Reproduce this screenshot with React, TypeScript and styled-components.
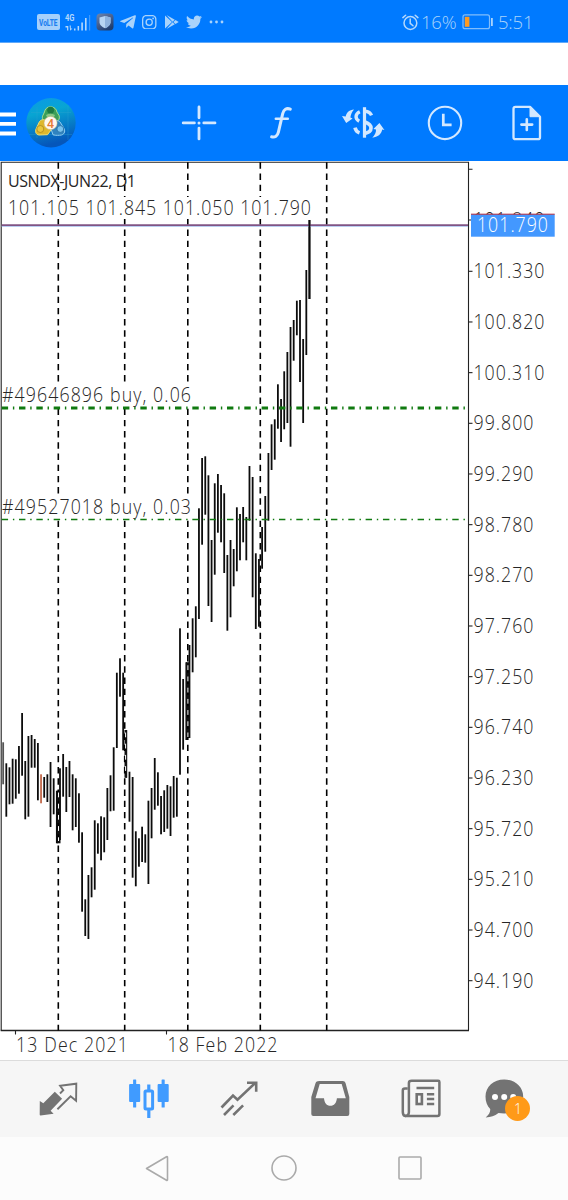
import React from "react";
import styled, { createGlobalStyle } from "styled-components";
import { FaTelegramPlane, FaTwitter } from "react-icons/fa";
import { BsInstagram } from "react-icons/bs";

const FONT = '"Open Sans", "Noto Sans", sans-serif';

const GlobalStyle = createGlobalStyle`
  body { margin: 0; background: #fff; font-family: ${FONT}; }
  * { box-sizing: border-box; }
  svg { display: block; flex: none; }
`;

const Screen = styled.div`
  width: 568px;
  height: 1200px;
  display: flex;
  flex-direction: column;
  overflow: hidden;
  background: #fff;
`;

const StatusBar = styled.header`
  height: 43px;
  padding: 0 36px 0 37px;
  display: flex;
  align-items: center;
  justify-content: space-between;
  background: #007aff;
  border-bottom: 1px solid #5fa9fa;
  color: #a9d3fb;
`;

const StatusGroup = styled.div`
  display: flex;
  align-items: center;
  height: 42px;
  padding-top: 2px;
`;

const Slot = styled.span<{ $w: number }>`
  display: flex;
  justify-content: center;
  width: ${(p) => p.$w}px;
`;

const StatusText = styled.span<{ $w: number }>`
  width: ${(p) => p.$w}px;
  font-size: 18.5px;
  font-weight: 300;
  line-height: 24px;
  letter-spacing: -0.2px;
  white-space: nowrap;
`;

const Spacer = styled.div`
  height: 42px;
  background: #fff;
`;

const Toolbar = styled.nav`
  height: 76px;
  display: flex;
  align-items: center;
  background: #007aff;
`;

const Brand = styled.div`
  width: 157.6px;
  display: flex;
  align-items: center;
`;

const ToolGrid = styled.div`
  display: grid;
  grid-template-columns: repeat(5, 82px);
  justify-items: center;
`;

const ChartArea = styled.main`
  height: 899px;
  background: #fff;
`;

const TabBar = styled.nav`
  height: 77px;
  padding: 0 13px;
  display: grid;
  grid-template-columns: repeat(5, 90.7px) 82px;
  justify-items: center;
  align-items: center;
  background: #f6f6f6;
  border-top: 1px solid #dcdcdc;
`;

const TabItem = styled.div`
  position: relative;
  width: 44px;
  height: 44px;
`;

const Badge = styled.span`
  position: absolute;
  left: 20px;
  top: 19px;
  width: 25px;
  height: 25px;
  border-radius: 50%;
  background: #ff9a18;
  color: #fff;
  font-size: 14px;
  font-weight: 300;
  line-height: 25px;
  text-align: center;
`;

const NavBar = styled.footer`
  flex: 1;
  padding: 0 94.5px 1px;
  display: grid;
  grid-template-columns: repeat(3, 1fr);
  justify-items: center;
  align-items: center;
  background: #fcfcfc;
`;

const AxisText = styled.text<{ $size?: number; $weight?: number; $color?: string }>`
  font-family: ${FONT};
  font-size: ${(p) => p.$size ?? 19.3}px;
  font-weight: ${(p) => p.$weight ?? 300};
  fill: ${(p) => p.$color ?? "#262626"};
`;

// Slightly condensed, loosely spaced lettering used for all figures in the chart.
const SQUEEZE = 0.92;
function Label({ x, y, width, color, children }: { x: number; y: number; width: number; color?: string; children: string }) {
  return (
    <AxisText $color={color} transform={`translate(${x} ${y}) scale(${SQUEEZE} 1)`} textLength={width / SQUEEZE}>
      {children}
    </AxisText>
  );
}

// High and low of every daily bar, as chart y coordinates.
const bars: [number, number][] = [
  [742.3, 784.3], [763.3, 816.7], [767.3, 804.3], [758.7, 803.7], [759.3, 798.7],
  [746, 793.7], [713, 775.7], [761, 819.3], [736, 816.7], [735, 767.7],
  [739, 767.7], [743, 800.3], [774.3, 803.3], [777, 797.7], [774.3, 802],
  [762, 827], [778.3, 814.3], [790.7, 843.3], [768.3, 840], [754, 796.7],
  [767, 812], [761, 797], [774.3, 830.3], [778.3, 827], [793.3, 842.7],
  [832.3, 911.7], [899.3, 936], [875, 939], [867.3, 897.3], [820.3, 889.7],
  [823.3, 853.7], [816.3, 860.3], [817.3, 852.3], [788, 840], [775.3, 811.3],
  [747.3, 810.7], [672.7, 748], [658.3, 696.7], [672.7, 750.3], [730, 777.7],
  [771.7, 821.7], [777, 877.7], [831.3, 886.3], [838.3, 866.7], [826.7, 862],
  [834.3, 862.7], [800.7, 884], [788, 838.3], [758, 809.7], [772.3, 805.7],
  [796, 834.3], [790.3, 832], [785, 828.7], [786.3, 836], [776, 817.7],
  [777.7, 816.7], [628.3, 774.7], [679, 749.7], [662.3, 740], [645, 738],
  [618.3, 672.3], [606.3, 657.3], [508.3, 619], [458, 544.7], [456.3, 514.7],
  [475.3, 606], [540, 622], [483.3, 574.7], [474, 532.7], [485, 542.3],
  [493.3, 573], [555, 630.7], [540, 617.3], [549, 586.3], [507.3, 571.3],
  [514, 560.3], [507, 542.3], [517, 560.3], [466, 520.7], [477, 597.3],
  [553.3, 629], [559, 626.7], [527, 568.7], [496, 551.7], [453, 520.7],
  [424.3, 470], [419.3, 459.7], [384.3, 428.7], [399, 442], [371.3, 429.3],
  [352, 423], [327, 446.7], [320, 360.7], [300.7, 335.3], [300, 382],
  [339, 423], [270, 355], [220, 299],
];

const separators = [58.3, 124.7, 187.8, 260.3, 326.7];
const prices = [
  "101.330", "100.820", "100.310", "99.800", "99.290", "98.780", "98.270", "97.760",
  "97.250", "96.740", "96.230", "95.720", "95.210", "94.700", "94.190",
];

function Chart() {
  return (
    <svg width="568" height="899" viewBox="0 161 568 899">
      <g stroke="#222" strokeWidth="1.1" fill="none">
        <path d="M1.2 1030.5V162.3H468.5V1030.5" />
        <path d="M0.7 1030.5H469" strokeWidth="1.3" />
        <path d="M469 169.3h3.500M469 220h3.500M15.500 1031v3.500M166.500 1031v3.500" />
        {prices.map((p, i) => (
          <path key={p} d={`M469 ${271.3 + i * 50.67}h3.5`} />
        ))}
      </g>
      {bars.map(([hi, lo], i) => (
        <rect key={i} x={2.25 + i * 3.158} y={hi} width="1.8" height={lo - hi}
          fill={i === 12 ? "#c26a4c" : i === 0 ? "#555" : "#0c0c0c"} />
      ))}
      {[[790.7, 843.3, 57, 3.5], [730, 777.7, 124.5, 2.5], [662.3, 738, 186, 3.5]].map(([a, b, x, w]) => (
        <rect key={x} x={x} y={a} width={w} height={b - a} fill="#111" />
      ))}
      {separators.map((x) => (
        <path key={x} d={`M${x} 162.3V1030.5`} stroke="#000" strokeWidth="1.6" strokeDasharray="6.4 4.8" />
      ))}
      {[[58.5, 792.5, 841], [125.6, 732.5, 775], [187.9, 665.3, 737]].map(([x, a, b]) => (
        <path key={x} d={`M${x} ${a}V${b}`} stroke="#fff" strokeWidth="1" strokeDasharray="4.8 6.4" />
      ))}
      <g fill="#fff">
        <rect x="3" y="197" width="306" height="22" />
        <rect x="2" y="384" width="189" height="22" />
        <rect x="2" y="496" width="189" height="22" />
      </g>
      <path d="M1.700 408.100H467" stroke="#107a10" strokeWidth="3" strokeDasharray="6.4 4.8 1.4 4.730" />
      <path d="M1.700 519.400H467" stroke="#107a10" strokeWidth="1.500" strokeDasharray="6.4 4.8 1.4 4.730" />
      <path d="M1.700 226.300H468" stroke="#a9c2ee" strokeWidth="1" />
      <path d="M1.700 225.100H468" stroke="#815484" strokeWidth="1.700" />
      <rect x="308.550" y="220" width="1.800" height="79" fill="#0c0c0c" />
      <AxisText $size={16} $weight={400} x="8" y="187" textLength="128">USNDX-JUN22, D1</AxisText>
      <Label x={8} y={215.200} width={303}>101.105 101.845 101.050 101.790</Label>
      <Label x={2} y={401.500} width={189}>#49646896 buy, 0.06</Label>
      <Label x={2} y={513.700} width={189}>#49527018 buy, 0.03</Label>
      {prices.map((p, i) => (
        <Label key={p} x={473.5} y={278.2 + i * 50.67} width={p.length === 7 ? 71 : 60}>{p}</Label>
      ))}
      <Label x={473.500} y={226.800} width={71}>101.840</Label>
      <rect x="471" y="214.300" width="83.700" height="22.400" fill="#4398ff" />
      <path d="M471 214.200h83.700" stroke="#b0283c" strokeWidth="1" />
      <Label x={477} y={232.300} width={71} color="#fff">101.790</Label>
      <Label x={16} y={1052} width={112}>13 Dec 2021</Label>
      <Label x={167.500} y={1052} width={110}>18 Feb 2022</Label>
    </svg>
  );
}

function VolteIcon() {
  return (
    <svg width="23" height="16" viewBox="0 0 23 16">
      <rect width="23" height="16" rx="2" fill="#a5d0fb" />
      <text x="2" y="11.500" fontFamily="Roboto" fontWeight="800" fontSize="9.500" textLength="18.500" lengthAdjust="spacingAndGlyphs" fill="#1c7ff0">VoLTE</text>
    </svg>
  );
}

function SignalIcon() {
  return (
    <svg width="27" height="18" viewBox="64 12 27 18" fill="#b4d8fc">
      <text x="65" y="20.200" fontFamily="Roboto" fontWeight="700" fontSize="9" textLength="9.500" lengthAdjust="spacingAndGlyphs">4G</text>
      <path d="M65.500 25h2.800v4.500h-1.200v-3h-1.600zM69.600 24.500h1.200v3h1.600l-2.200 2.200zM74 27.500h1.500v2H74zM77.600 25h1.500v4.500h-1.500zM81.300 21.500h1.600v8h-1.600zM85 17h1.600v12.500H85z" />
      <path d="M89 14h1.200v15.500H89z" opacity=".35" />
    </svg>
  );
}

function ShieldIcon() {
  return (
    <svg width="18" height="18" viewBox="0 0 18 18">
      <defs>
        <linearGradient id="shieldBg" x2=".6" y2="1"><stop stopColor="#6f87ae" /><stop offset=".5" stopColor="#4a6290" /><stop offset="1" stopColor="#1f3e70" /></linearGradient>
      </defs>
      <rect x=".5" y=".5" width="17" height="17" rx="4" fill="url(#shieldBg)" />
      <path d="M9 3l5.500 1.600v4.900c0 2.700-2.500 4.300-5.500 5.800-3-1.500-5.500-3.100-5.500-5.800v-4.900z" fill="#b7d5f3" />
      <path d="M9 3l5.500 1.600v4.900c0 2.700-2.500 4.300-5.500 5.800z" fill="#8eb3df" />
    </svg>
  );
}

function PlayIcon() {
  return (
    <svg width="15" height="16" viewBox="164 14 15 16" fill="#a9d3fb">
      <path d="M165 15.500l7 6.500-7 6.500zM166.500 15l8.300 4.700-2.300 2zM166.500 29l8.300-4.700-2.300-2zM175.500 20l3.200 2-3.200 2-2.200-2z" />
    </svg>
  );
}

function AlarmIcon() {
  return (
    <svg width="17" height="17" viewBox="402 13 17 17" fill="none" stroke="#b4d8fc" strokeWidth="1.500" strokeLinecap="round">
      <circle cx="410.400" cy="22" r="6.400" />
      <path d="M410.200 18v4.300l2.800 2.500M402.900 16.600l2.700-2.400M417.900 16.600l-2.700-2.400" />
    </svg>
  );
}

function BatteryIcon() {
  return (
    <svg width="32" height="16" viewBox="462 14 32 16">
      <rect x="463" y="14.900" width="26.500" height="13.800" rx="2" fill="none" stroke="#80bdfc" strokeWidth="1.200" />
      <rect x="464.800" y="16.800" width="4.600" height="10" fill="#ff9a20" />
      <rect x="491" y="18" width="1.800" height="8" fill="#a9d3fb" />
    </svg>
  );
}

function Logo() {
  return (
    <svg width="52" height="52" viewBox="25 97 52 52">
      <defs>
        <linearGradient id="logoBg" x2=".25" y2="1"><stop stopColor="#0b99e8" /><stop offset=".35" stopColor="#08a5d2" /><stop offset="1" stopColor="#0556ba" /></linearGradient>
      </defs>
      <circle cx="51" cy="122.700" r="24.700" fill="url(#logoBg)" />
      <path d="M37 107v31M68 106v34M31 112.500h40M29 134.500h43" stroke="#31a6d0" strokeWidth=".5" opacity=".65" />
      <g strokeLinejoin="round" strokeWidth="1">
        <path d="M44.500 112c.3-2.700 2.500-5.200 6.100-5.200s6 2.500 6.300 5.200l2.300 3.800c.8 3-.8 5.500-3.500 6H46c-2.700-.7-4.500-3.300-3.300-6z" fill="#3c9f58" stroke="#a6dc8d" />
        <path d="M53 134.800c3 .8 6 .6 8.500.2 3.500-1 4-4.500 2-7.500l-3.500-5.500c-2-2-5-1.500-6.500.5l-3 5z" fill="#2f83c0" stroke="#91cdf0" />
        <path d="M51 130l-3.500 4.700-8.500.3c-3.500-.5-4.300-4-2.500-7l3-6.500c2-2.500 6-2.500 7.500.5z" fill="#deb82d" stroke="#f0df70" />
      </g>
      <path d="M46 115l4.500-2 4.500 2-2 4h-5z" fill="#8cc684" />
      <circle cx="50.600" cy="110.200" r="3.400" fill="#1d7a41" />
      <circle cx="40.300" cy="129" r="3.500" fill="#eac63b" stroke="#a98520" strokeWidth=".8" />
      <circle cx="60.300" cy="129" r="3.400" fill="#76c2ee" stroke="#236aa0" strokeWidth=".8" />
      <circle cx="50.600" cy="123" r="6.600" fill="#fff8ef" stroke="#c3ad74" strokeWidth=".5" />
      <text x="50.500" y="127.500" textAnchor="middle" fontFamily="Roboto" fontSize="12.500" fontWeight="500" fill="#e77b36">4</text>
    </svg>
  );
}

const tint = "#d3e8ff";

function CrosshairIcon() {
  return (
    <svg width="36" height="36" viewBox="180.600 105.300 36 36" stroke={tint} strokeWidth="2.800" strokeLinecap="round">
      <path d="M198.600 107.300v10.800M198.600 128.400v10.800M182.800 123.200h11.200M203.400 123.200h11.200" />
      <path d="M198.600 123.200h.01" strokeWidth="3" />
    </svg>
  );
}

function FunctionIcon() {
  return (
    <svg width="30" height="36" viewBox="266 105 30 36" fill="none" stroke={tint} strokeWidth="3" strokeLinecap="round">
      <path d="M290.300 109.200c-3.800-1.600-6.600.3-7.600 4.500l-4.300 18.400c-.9 3.800-3.400 5.700-6.800 4.700" />
      <path d="M275.800 118.800h12" strokeWidth="2.500" />
    </svg>
  );
}

function CurrencyIcon() {
  return (
    <svg width="44" height="36" viewBox="341 105.300 44 36" fill="none" stroke={tint}>
      <path d="M364.500 107.500v30.500" strokeWidth="3.200" />
      <path d="M371.500 115.700c-1-2.600-3.500-4-6.500-4.200" strokeWidth="3.400" />
      <path d="M359.800 112c-4.400 2-5.300 7-.6 9.600" strokeWidth="3.400" />
      <path d="M365 122.300c8 2.700 8 9.700 0 11.500" strokeWidth="3.600" />
      <path d="M359.500 133.200c-2.700-.9-4-2.900-4.500-5.200" strokeWidth="3.600" />
      <g fill={tint} stroke="none">
        <path d="M354 109.700c-4.500.5-7.500 2.800-8.300 7l-3.700-.5 4.200 7 6.400-4.500-2.200-1c.3-2.800 1.600-5.600 3.600-8z" />
        <path d="M372.300 138c5.500-.7 9-3.400 9.900-8.200l2.200.5-5-7-6 6 2.600.4c.2 3.200-1.200 5.700-3.700 8.300z" />
      </g>
    </svg>
  );
}

function ClockIcon() {
  return (
    <svg width="36" height="36" viewBox="427 105.300 36 36" fill="none" stroke={tint}>
      <circle cx="445" cy="123.200" r="16.200" strokeWidth="2.100" />
      <path d="M443.300 114v11.200h8.300" strokeWidth="2.700" />
    </svg>
  );
}

function NewFileIcon() {
  return (
    <svg width="32" height="36" viewBox="511 105.300 32 36" fill="none" stroke={tint}>
      <path d="M515.500 107.200h14.500l10 9.800v20.500q0 2-2 2h-22.500q-2 0-2-2v-28.300q0-2 2-2z" strokeWidth="2.300" strokeLinejoin="round" />
      <path d="M530 107.200v9.800h10z" fill={tint} />
      <path d="M526.800 119.500v10.800M521.400 124.900h10.800" strokeWidth="2.600" strokeLinecap="round" />
    </svg>
  );
}

function TradeIcon() {
  return (
    <svg width="44" height="44" viewBox="36 1076 44 44">
      <path d="M39.800 1100l3.500 2.300 11.500-11.600 7.300 7-11.500 12 3 3-13 1.900q-.9 0-.9-1z" fill="#737373" />
      <path d="M60 1092.500l3.300-3.300-3.200-4.500 16.200-2-.2 17-5.500-4.400-13.200 13" fill="none" stroke="#737373" strokeWidth="1.900" />
    </svg>
  );
}

function CandlesIcon() {
  return (
    <svg width="44" height="44" viewBox="127.200 1076 44 44" fill="#409bff">
      <path d="M133.300 1079q0-.5.500-.5h2.100q.5 0 .5.500v4h3q1 0 1 1v16q0 1-1 1h-3v5q0 .5-.5.500h-2.100q-.5 0-.5-.5v-5h-3q-1 0-1-1v-16q0-1 1-1h3z" />
      <path d="M161.800 1079q0-.5.500-.5h2.100q.5 0 .5.500v4h3q1 0 1 1v16q0 1-1 1h-3v5q0 .5-.5.500h-2.100q-.5 0-.5-.5v-5h-3q-1 0-1-1v-16q0-1 1-1h3z" />
      <rect x="145.200" y="1090" width="7.600" height="18" rx="1" fill="none" stroke="#409bff" strokeWidth="3" />
      <path d="M147.400 1083.500h3.200v6h-3.200zM147.400 1109h3.200v8h-3.200z" />
    </svg>
  );
}

function TrendIcon() {
  return (
    <svg width="44" height="44" viewBox="218.500 1076 44 44" fill="none" stroke="#737373" strokeWidth="2.600">
      <path d="M222 1106.500l11.500-12 4.500 4.200 18-17M247.500 1081.700h9.200v9M224.500 1114l9.500-9.600M233.800 1114l9.800-9.600" />
    </svg>
  );
}

function InboxIcon() {
  return (
    <svg width="44" height="44" viewBox="308.300 1076 44 44">
      <path fillRule="evenodd" d="M319.500 1080h23.500c1.500 0 2.400.8 2.900 2.200l3.700 13.800v17q0 2-2 2h-34q-2 0-2-2v-17l4.200-13.800c.5-1.400 1.700-2.200 3.700-2.200zM320 1083l-4.200 14.200h8.500c.3 4.500 2.800 7.600 6.400 7.600s6.200-3.100 6.500-7.600h8.900L342 1083z" fill="#737373" />
    </svg>
  );
}

function NewsIcon() {
  return (
    <svg width="44" height="44" viewBox="399.300 1076 44 44" fill="none" stroke="#737373" strokeWidth="2.500">
      <path d="M412 1079.700h26.500q1.200 0 1.200 1.200v32q0 2-2 2h-32.500c2.500 0 4-1.500 4-4v-29q0-2.200 2.800-2.200z" />
      <path d="M408 1087.500h-2.700q-2.200 0-2.200 2v21.500q0 4 3 4" />
      <path d="M416.800 1087h17.700M427.200 1093.300h7.300M427.200 1098h7.300M427.200 1103h7.300" />
      <rect x="417" y="1093.300" width="5.200" height="9.700" strokeWidth="2.600" />
    </svg>
  );
}

function ChatIcon() {
  return (
    <svg width="44" height="44" viewBox="485 1076 44 44">
      <path d="M504.200 1078.500c10.500 0 19 7.300 19 17s-8.500 17-19 17q-3-.2-5.700-.5c-4 3-7.500 4.300-12.800 4.400 3.200-2.700 4.800-5.300 4.500-8.300-3-3-4.700-7.500-4.700-12.600 0-9.700 8.200-17 18.700-17z" fill="#737373" />
      <g fill="#fff"><circle cx="495" cy="1096" r="3" /><circle cx="504.200" cy="1096" r="3" /><circle cx="513.200" cy="1096" r="3" /></g>
    </svg>
  );
}

export default function App() {
  return (
    <>
      <GlobalStyle />
      <Screen>
        <StatusBar>
          <StatusGroup>
            <VolteIcon />
            <Slot $w={35}><SignalIcon /></Slot>
            <Slot $w={20}><ShieldIcon /></Slot>
            <Slot $w={25}><FaTelegramPlane size={18} /></Slot>
            <Slot $w={19}><BsInstagram size={14.5} /></Slot>
            <Slot $w={25}><PlayIcon /></Slot>
            <Slot $w={19}><FaTwitter size={16} /></Slot>
            <Slot $w={27}>
              <svg width="15" height="4" viewBox="0 0 15 4" fill="#a9d3fb"><circle cx="2" cy="2" r="1.400" /><circle cx="7.500" cy="2" r="1.400" /><circle cx="13" cy="2" r="1.400" /></svg>
            </Slot>
          </StatusGroup>
          <StatusGroup>
            <Slot $w={21}><AlarmIcon /></Slot>
            <StatusText $w={41}>16%</StatusText>
            <BatteryIcon />
            <Slot $w={4} />
            <StatusText $w={34}>5:51</StatusText>
          </StatusGroup>
        </StatusBar>
        <Spacer />
        <Toolbar>
          <Brand>
            <svg width="25" height="28" viewBox="0 0 25 28" fill="#fff"><path d="M0 3.500h16v4H0zM0 13h16v3.800H0zM0 22.500h16v4H0z" /></svg>
            <Logo />
          </Brand>
          <ToolGrid>
            <CrosshairIcon />
            <FunctionIcon />
            <CurrencyIcon />
            <ClockIcon />
            <NewFileIcon />
          </ToolGrid>
        </Toolbar>
        <ChartArea><Chart /></ChartArea>
        <TabBar>
          <TabItem><TradeIcon /></TabItem>
          <TabItem><CandlesIcon /></TabItem>
          <TabItem><TrendIcon /></TabItem>
          <TabItem><InboxIcon /></TabItem>
          <TabItem><NewsIcon /></TabItem>
          <TabItem><ChatIcon /><Badge>1</Badge></TabItem>
        </TabBar>
        <NavBar>
          <svg width="28" height="28" viewBox="145 1154 28 28" fill="none" stroke="#aaa" strokeWidth="1.600" strokeLinejoin="round"><path d="M147.500 1168.500l20-11.800q1-.4 1 .7v22.200q0 1.200-1 .6z" /></svg>
          <svg width="28" height="28" viewBox="0 0 28 28" fill="none" stroke="#aaa" strokeWidth="1.600"><circle cx="14" cy="14" r="12" /></svg>
          <svg width="28" height="28" viewBox="0 0 28 28" fill="none" stroke="#aaa" strokeWidth="1.600"><rect x="3" y="3" width="22" height="22" rx="1" /></svg>
        </NavBar>
      </Screen>
    </>
  );
}
